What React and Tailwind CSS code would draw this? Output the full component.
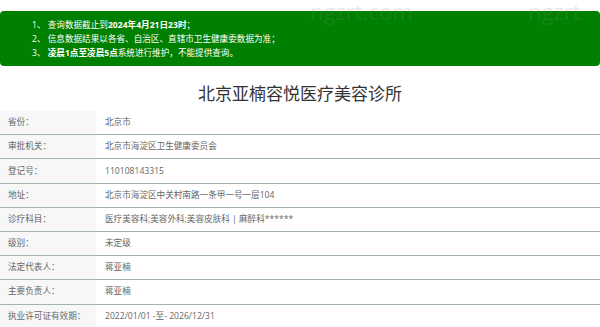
import React from "react";

const rows = [
  { label: "省份：", value: "北京市" },
  { label: "审批机关：", value: "北京市海淀区卫生健康委员会" },
  { label: "登记号：", value: "110108143315" },
  { label: "地址：", value: "北京市海淀区中关村南路一条甲一号一层104" },
  { label: "诊疗科目：", value: "医疗美容科;美容外科;美容皮肤科 | 麻醉科******" },
  { label: "级别：", value: "未定级" },
  { label: "法定代表人：", value: "蒋亚楠" },
  { label: "主要负责人：", value: "蒋亚楠" },
  { label: "执业许可证有效期：", value: "2022/01/01 -至- 2026/12/31" },
];

const App = () => {
  return (
    <div
      className="relative w-[600px] h-[327px] overflow-hidden bg-white"
      style={{ fontFamily: '"Open Sans", "Noto Sans CJK SC", sans-serif' }}
    >
      {/* notice box */}
      <div className="mt-[11px] h-[55px] rounded-[4px] bg-[#008000] pl-[32px] pt-[7px] text-[8.6px] leading-[14px] text-white">
        <p>
          1、 查询数据截止到<b>2024年4月21日23时</b>；
        </p>
        <p>2、 信息数据结果以各省、自治区、直辖市卫生健康委数据为准；</p>
        <p>
          3、 <b>凌晨1点至凌晨5点</b>系统进行维护，不能提供查询。
        </p>
      </div>

      <h1 className="mt-[16px] h-[24px] text-center text-[17px] leading-[24px] text-[#333]">
        北京亚楠容悦医疗美容诊所
      </h1>

      <div className="mt-[5px]">
        {rows.map(({ label, value }) => (
          <div
            key={label}
            className="flex h-[24.2px] border-b border-[#a3b3ad] text-[8.6px] text-[#666]"
          >
            <div className="flex w-[96px] items-center bg-[#f7f7f7] pl-[8px]">
              {label}
            </div>
            <div className="flex flex-1 items-center pl-[9px]">{value}</div>
          </div>
        ))}
      </div>

      {/* watermark */}
      <div className="pointer-events-none absolute left-[310px] top-0 text-[22px] leading-none text-[#888]/20">
        ngzrt.com
      </div>
      <div className="pointer-events-none absolute left-[528px] top-0 text-[22px] leading-none text-[#888]/20">
        ngzrt
      </div>
    </div>
  );
};

export default App;
